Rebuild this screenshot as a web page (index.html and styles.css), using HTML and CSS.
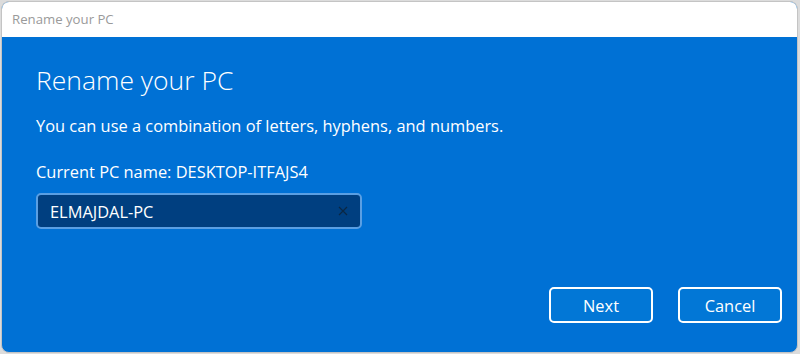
FILE: index.html
```html
<!DOCTYPE html>
<html>
<head>
<meta charset="utf-8">
<link rel="stylesheet" href="styles.css">
</head>
<body>
<div class="window">
  <div class="titlebar">Rename your PC</div>
  <div class="content">
    <h1 class="heading">Rename your PC</h1>
    <p class="desc">You can use a combination of letters, hyphens, and numbers.</p>
    <p class="current">Current PC name: DESKTOP-ITFAJS4</p>
    <div class="field">
      <span class="value">ELMAJDAL-PC</span>
      <svg class="clear" width="10" height="10" viewBox="0 0 10 10"><path d="M1 1L9 9M9 1L1 9" stroke="#0a2744" stroke-width="1.2" fill="none"/></svg>
    </div>
    <div class="spacer"></div>
    <div class="actions">
      <button class="btn">Next</button>
      <button class="btn">Cancel</button>
    </div>
  </div>
</div>
</body>
</html>
```
FILE: styles.css
```css
html, body { margin: 0; padding: 0; }
body {
  background: #dcdcdc;
  width: 800px;
  height: 354px;
  overflow: hidden;
  font-family: "Open Sans", "Noto Sans", sans-serif;
}
.window {
  margin: 1px 0 0 1px;
  width: 795px;
  height: 350px;
  border: 1px solid #c4c4c4;
  border-radius: 8px;
  overflow: hidden;
  display: flex;
  flex-direction: column;
  background: #0071d5;
}
.titlebar {
  height: 35px;
  background: #fff;
  color: #9a9a9a;
  font-size: 13.2px;
  line-height: 35px;
  padding-left: 10px;
  box-sizing: border-box;
}
.content {
  flex: 1;
  display: flex;
  flex-direction: column;
  padding: 25px 15px 29px 34px;
  color: #fff;
}
.heading {
  margin: 0;
  font-weight: 300;
  font-size: 26.5px;
  line-height: 36px;
}
.desc {
  margin: 17px 0 0;
  font-size: 16.4px;
  line-height: 22px;
}
.current {
  margin: 24px 0 0;
  font-size: 16.4px;
  line-height: 22px;
}
.field {
  margin-top: 10px;
  width: 326px;
  height: 36px;
  box-sizing: border-box;
  border: 2px solid #5a9fe3;
  border-radius: 5px;
  background: #003f80;
  display: flex;
  align-items: center;
  padding: 0 12px 0 12px;
}
.value { flex: 1; font-size: 16.4px; }
.clear { display: block; }
.spacer { flex: 1; }
.actions {
  display: flex;
  justify-content: flex-end;
  gap: 25px;
}
.btn {
  width: 104px;
  height: 36px;
  border: 2px solid #fff;
  border-radius: 5px;
  background: #0277d6;
  color: #fff;
  font-family: "Open Sans", "Noto Sans", sans-serif;
  font-size: 16.4px;
  padding: 0;
}
```
